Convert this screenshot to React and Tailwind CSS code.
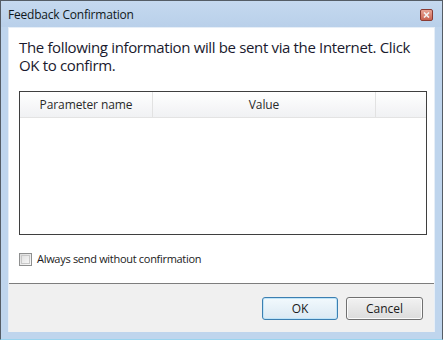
export default function App() {
  const font = { fontFamily: '"Open Sans", "Noto Sans", sans-serif' };
  return (
    <div
      className="w-[443px] h-[340px] flex flex-col bg-[#bfd5ed] border-l border-t border-r border-[#555d66] border-b border-b-[#9ad4ee] overflow-hidden"
      style={font}
    >
      {/* Title bar */}
      <div className="h-[26px] shrink-0 flex items-center pl-[7px] pr-[9px] bg-gradient-to-b from-[#c5d9ef] to-[#b9d0ea]">
        <span className="text-[12px] text-[#101820] tracking-[-0.2px] leading-none mt-[1px]">Feedback Confirmation</span>
        <div className="ml-auto mt-[1px] w-[13px] h-[12px] rounded-[2px] border border-[#8a3a32] bg-gradient-to-b from-[#e8a596] to-[#c8614f] flex items-center justify-center">
          <svg width="7" height="6" viewBox="0 0 7 6">
            <path d="M1 0.5 L6 5.5 M6 0.5 L1 5.5" stroke="#f4f4f4" strokeWidth="1.6" />
          </svg>
        </div>
      </div>

      {/* Client area */}
      <div className="mx-[7px] h-[305px] shrink-0 flex flex-col bg-white border-t border-l border-r border-[#e6eef7]">
        <div className="h-[255px] shrink-0 flex flex-col px-[10px]">
          <p className="mt-[10px] text-[15px] leading-[18px] text-[#1a1a2e] tracking-[-0.35px]">
            The following information will be sent via the Internet. Click OK to confirm.
          </p>
          <div className="mt-[17px] h-[144px] w-[408px] border border-[#3f3f3f] bg-white flex flex-col">
            <div className="h-[26px] flex bg-gradient-to-b from-white to-[#f0f1f3] border-b border-[#e3e3e3] text-[12px] text-[#2a2a2a] tracking-[-0.1px]">
              <div className="w-[133px] flex items-center justify-center border-r border-[#e2e2e2]">Parameter name</div>
              <div className="w-[223px] flex items-center justify-center border-r border-[#e2e2e2]">Value</div>
              <div className="flex-1" />
            </div>
          </div>
          <label className="mt-[16px] flex items-center gap-[5px] text-[11px] text-[#1a1a1a]">
            <span className="w-[13px] h-[13px] border border-[#8e8f8f] bg-gradient-to-br from-[#dcdcdc] to-[#fbfbfb] flex items-center justify-center">
              <span className="w-[9px] h-[9px] border border-[#c8c8c8] bg-gradient-to-br from-[#e2e2e2] to-[#f6f6f6]" />
            </span>
            <span className="tracking-[-0.3px] text-[11px]">Always send without confirmation</span>
          </label>
        </div>
        <div className="flex-1 flex items-start justify-end gap-[8px] pr-[11px] pt-[13px] bg-[#f0f0f0] border-t border-[#7d7d7d]">
          <button className="w-[76px] h-[23px] rounded-[3px] border border-[#3c7fb1] bg-gradient-to-b from-[#f2f9fd] to-[#dbe9f3] text-[12px] text-[#1a1a1a] shadow-[inset_0_0_0_1px_#bfe4f8]">
            OK
          </button>
          <button className="w-[77px] h-[23px] rounded-[3px] border border-[#707070] bg-gradient-to-b from-[#f2f2f2] to-[#dcdcdc] text-[12px] text-[#1a1a1a] shadow-[inset_0_0_0_1px_#fbfbfb]">
            Cancel
          </button>
        </div>
      </div>
    </div>
  );
}
